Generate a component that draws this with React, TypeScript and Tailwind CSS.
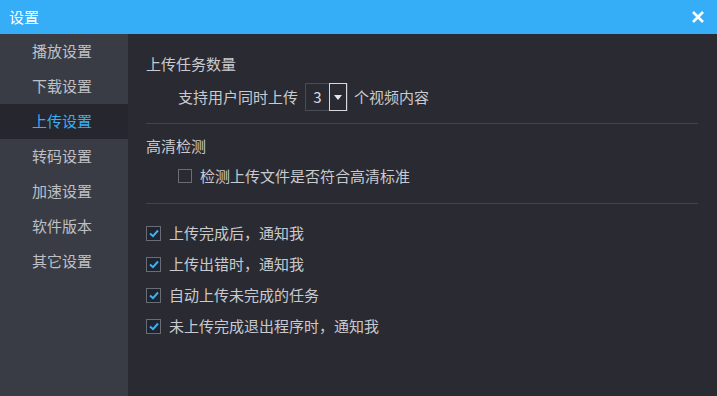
import { useState } from "react";

const menu = ["播放设置", "下载设置", "上传设置", "转码设置", "加速设置", "软件版本", "其它设置"];

const notices = [
    "上传完成后，通知我",
    "上传出错时，通知我",
    "自动上传未完成的任务",
    "未上传完成退出程序时，通知我",
];

const CheckBox = ({ checked }: { checked: boolean }) => (
    <span className="w-[15px] h-[15px] border border-[#6b6d75] bg-[#1e2530] flex items-center justify-center shrink-0">
        {checked && (
            <svg width="10" height="9" viewBox="0 0 10 9">
                <path d="M1 4.5 L4 7.2 L9 1.5" stroke="#3fb0f0" strokeWidth="2" fill="none" />
            </svg>
        )}
    </span>
);

const App = () => {
    const [active, setActive] = useState(2);

    return (
        <div
            className="w-[717px] h-[396px] flex flex-col bg-[#2a2a32] text-[#c9cacf] text-[15px] overflow-hidden"
            style={{ fontFamily: '"Microsoft YaHei", "Noto Sans CJK SC", sans-serif' }}
        >
            <div className="h-[34px] bg-[#35adf7] flex items-center justify-between pl-[9px] pr-[12px] shrink-0">
                <span className="text-white text-[15px]">设置</span>
                <svg width="14" height="14" viewBox="0 0 14 14">
                    <path d="M2 2 L12 12 M12 2 L2 12" stroke="white" strokeWidth="2.6" />
                </svg>
            </div>
            <div className="flex flex-1">
                <div className="w-[128px] bg-[#3a3c45] flex flex-col shrink-0">
                    {menu.map((item, i) => (
                        <div
                            key={item}
                            onClick={() => setActive(i)}
                            className={
                                i == active
                                    ? "h-[35px] flex items-center pl-[32px] text-[15px] bg-[#25262e] text-[#39aef4]"
                                    : "h-[35px] flex items-center pl-[32px] text-[15px] text-[#bfc0c5]"
                            }
                        >
                            {item}
                        </div>
                    ))}
                </div>
                <div className="flex-1 flex flex-col pl-[18px] pr-[19px]">
                    <div className="pt-[20px] pb-[12px] border-b border-[#43444c]">
                        <div className="leading-[20px]">上传任务数量</div>
                        <div className="flex items-center pl-[32px] mt-[9px] gap-[6px] leading-[20px]">
                            <span>支持用户同时上传</span>
                            <div className="flex h-[28px] border border-[#4a4b53] ml-[1px]">
                                <span className="w-[23px] flex items-center justify-center text-[15px] text-[#dcdde0]">3</span>
                                <span className="w-[18px] border border-[#d8d8dc] flex items-center justify-center my-[-1px]">
                                    <svg width="8" height="5" viewBox="0 0 8 5">
                                        <path d="M0 0 L8 0 L4 5 Z" fill="#e6e6e9" />
                                    </svg>
                                </span>
                            </div>
                            <span>个视频内容</span>
                        </div>
                    </div>
                    <div className="pt-[12px] pb-[17px] border-b border-[#43444c]">
                        <div className="leading-[20px]">高清检测</div>
                        <div className="flex items-center gap-[8px] pl-[32px] mt-[10px] leading-[20px]">
                            <span className="w-[14px] h-[14px] border border-[#6b6d75]" />
                            <span>检测上传文件是否符合高清标准</span>
                        </div>
                    </div>
                    <div className="flex flex-col gap-[11px] pt-[19px]">
                        {notices.map((n) => (
                            <div key={n} className="flex items-center gap-[8px] h-[20px]">
                                <CheckBox checked />
                                <span>{n}</span>
                            </div>
                        ))}
                    </div>
                </div>
            </div>
        </div>
    );
};

export default App;
